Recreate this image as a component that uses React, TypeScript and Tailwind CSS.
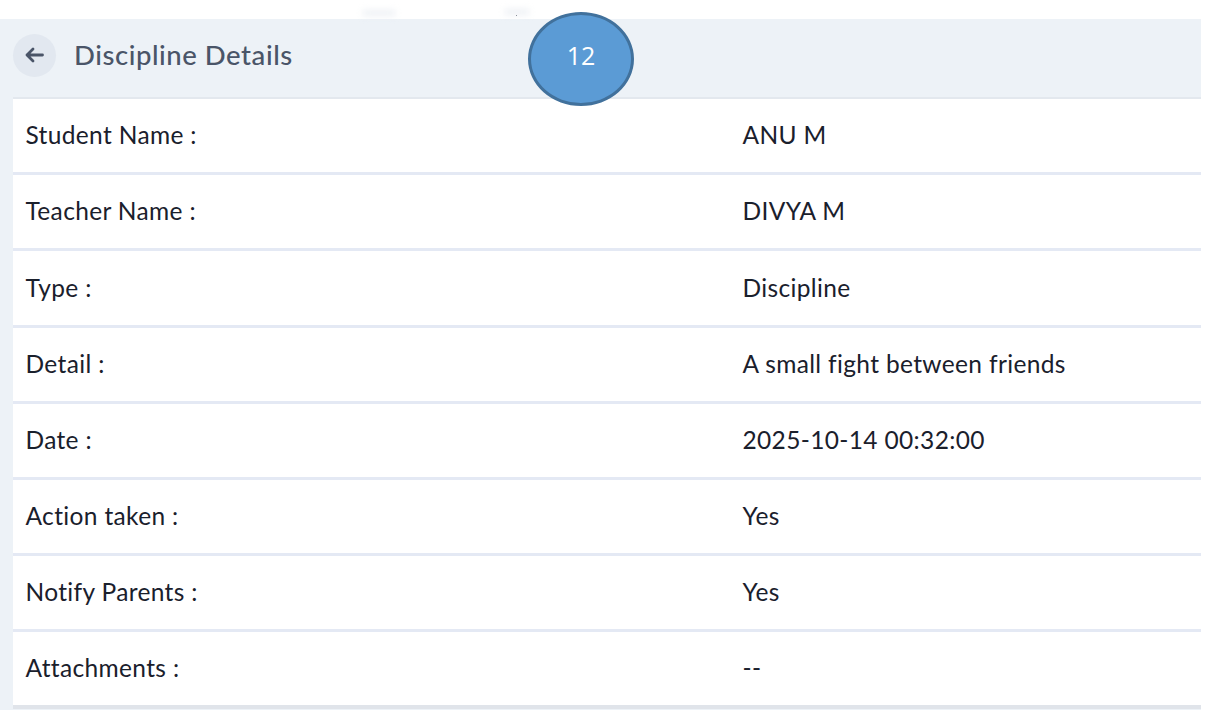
const rows = [
    { label: 'Student Name :', value: 'ANU M' },
    { label: 'Teacher Name :', value: 'DIVYA M' },
    { label: 'Type :', value: 'Discipline' },
    { label: 'Detail :', value: 'A small fight between friends' },
    { label: 'Date :', value: '2025-10-14 00:32:00' },
    { label: 'Action taken :', value: 'Yes' },
    { label: 'Notify Parents :', value: 'Yes' },
    { label: 'Attachments :', value: '--' },
];

export default function App() {
    return (
        <div className="relative w-[1212px] h-[712px] overflow-hidden bg-white font-['Lato',sans-serif]">
            <div className="h-[19px] relative">
                <span className="absolute left-[362px] top-[10px] w-[34px] h-[6px] rounded-full bg-[#eef1f5] blur-[3px]" />
                <span className="absolute left-[504px] top-[9px] w-[26px] h-[6px] rounded-full bg-[#eef1f5] blur-[3px]" />
                <span className="absolute left-[516px] top-[15px] w-px h-px bg-[#8a8f99]" />
            </div>

            <div className="w-[1201px] h-[691px] bg-[#edf2f7] flex flex-col">
                <div className="h-[78px] flex items-center pb-[6px] pl-[13px] gap-[18px] shrink-0">
                    <button className="w-[43px] h-[43px] rounded-full bg-[#e2e8f0] flex items-center justify-center text-[#4a5568]">
                        <svg width="19" height="16" viewBox="0 0 19 16" fill="none" stroke="currentColor" strokeWidth="2.8" strokeLinecap="round" strokeLinejoin="round">
                            <path d="M17.5 8H2M8 2 2 8l6 6" />
                        </svg>
                    </button>
                    <h1 className="text-[27.5px] leading-none font-medium text-[#4a5568] tracking-[0.55px]">Discipline Details</h1>
                </div>

                <div className="ml-[13px] bg-white border-t-2 border-[#e3e8ee] flex flex-col">
                    {rows.map((row, i) => (
                        <div
                            key={row.label}
                            className={`flex items-center pl-[12.5px] text-[24.5px] text-[#1a202c] tracking-[0.35px] ${i < rows.length - 1 ? 'h-[76.2px] border-b-[3px] border-[#e4e9f4]' : 'h-[77px] border-b-[4px] border-[#e0e4ea]'}`}
                        >
                            <div className="w-[717px] shrink-0">{row.label}</div>
                            <div>{row.value}</div>
                        </div>
                    ))}
                </div>
            </div>

            <div className="absolute left-[528px] top-[12px] w-[106px] h-[94px] pb-[7px] rounded-[50%] bg-[#5b9bd5] border-[3px] border-[#41719c] flex items-center justify-center text-white text-[25px] font-['Open_Sans',sans-serif]">
                12
            </div>
        </div>
    );
}
